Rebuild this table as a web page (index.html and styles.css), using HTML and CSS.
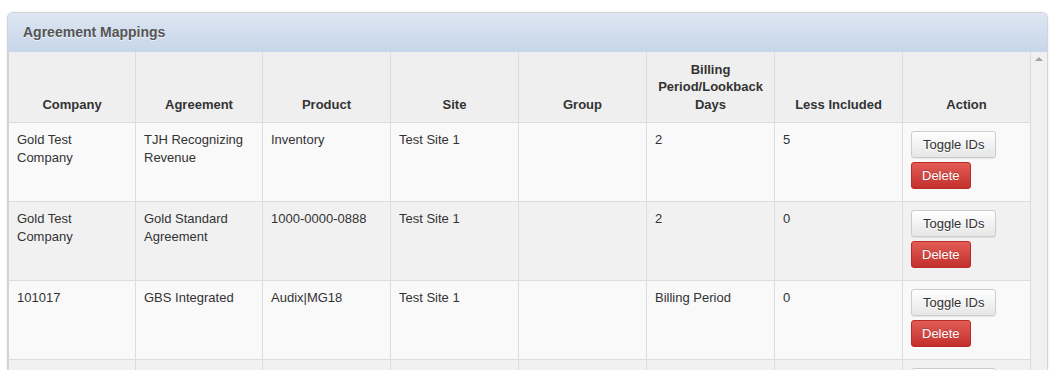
FILE: index.html
```
<!DOCTYPE html>
<html>
<head>
<meta charset="utf-8">
<link rel="stylesheet" href="styles.css">
</head>
<body>
<div class="page">
  <div class="panel">
    <div class="panel-heading">Agreement Mappings</div>
    <div class="panel-body">
      <table class="grid">
        <colgroup>
          <col class="c1"><col class="c2"><col class="c3"><col class="c3"><col class="c3"><col class="c3"><col class="c3"><col class="c3">
        </colgroup>
        <thead>
          <tr>
            <th>Company</th>
            <th>Agreement</th>
            <th>Product</th>
            <th>Site</th>
            <th>Group</th>
            <th>Billing Period/Lookback Days</th>
            <th>Less Included</th>
            <th>Action</th>
          </tr>
        </thead>
        <tbody>
          <tr class="odd">
            <td>Gold Test Company</td>
            <td>TJH Recognizing Revenue</td>
            <td>Inventory</td>
            <td>Test Site 1</td>
            <td></td>
            <td>2</td>
            <td>5</td>
            <td><div class="actions"><button class="btn btn-default">Toggle IDs</button><button class="btn btn-danger">Delete</button></div></td>
          </tr>
          <tr class="even">
            <td>Gold Test Company</td>
            <td>Gold Standard Agreement</td>
            <td>1000-0000-0888</td>
            <td>Test Site 1</td>
            <td></td>
            <td>2</td>
            <td>0</td>
            <td><div class="actions"><button class="btn btn-default">Toggle IDs</button><button class="btn btn-danger">Delete</button></div></td>
          </tr>
          <tr class="odd">
            <td>101017</td>
            <td>GBS Integrated</td>
            <td>Audix|MG18</td>
            <td>Test Site 1</td>
            <td></td>
            <td>Billing Period</td>
            <td>0</td>
            <td><div class="actions"><button class="btn btn-default">Toggle IDs</button><button class="btn btn-danger">Delete</button></div></td>
          </tr>
          <tr class="even">
            <td>&nbsp;</td>
            <td></td>
            <td></td>
            <td></td>
            <td></td>
            <td></td>
            <td></td>
            <td><div class="actions"><button class="btn btn-default">Toggle IDs</button><button class="btn btn-danger">Delete</button></div></td>
          </tr>
        </tbody>
      </table>
      <div class="scrollbar"><span class="arrow-up"></span></div>
    </div>
  </div>
</div>
</body>
</html>
```
FILE: styles.css
```
html, body {
  margin: 0;
  padding: 0;
  background: #fff;
  height: 370px;
  overflow: hidden;
}
body {
  font-family: "Liberation Sans", Arial, Helvetica, sans-serif;
  font-size: 13px;
  color: #333;
}
.page {
  padding: 12px 9px 0 7px;
}
.panel {
  border: 1px solid #d4d4d4;
  border-bottom: none;
  border-radius: 6px 6px 0 0;
  box-shadow: 0 0 2px rgba(0,0,0,0.12);
  overflow: hidden;
}
.panel-heading {
  height: 39px;
  line-height: 39px;
  padding: 0 15px;
  font-size: 14px;
  font-weight: bold;
  color: #555;
  text-shadow: 0 1px 0 rgba(255,255,255,0.7);
  background: linear-gradient(to bottom, #dde6f2 0%, #c7d6ea 100%);
}
.panel-body {
  display: flex;
  align-items: stretch;
  background: #f0f0f0;
}
.grid {
  border-collapse: collapse;
  table-layout: fixed;
  width: 1022px;
  flex: none;
}
.c1 { width: 127px; }
.c2 { width: 127px; }
.c3 { width: 128px; }
.grid th, .grid td {
  border: 1px solid #dcdcdc;
  padding: 8px 8px 8px;
  line-height: 17.5px;
  text-align: left;
  vertical-align: top;
}
.grid tr > :first-child { border-left: 1px solid #d4d4d4; }
.grid th {
  background: #efefef;
  font-weight: bold;
  text-align: center;
  vertical-align: bottom;
  height: 53px;
  padding-top: 8px;
  padding-bottom: 9px;
}
.grid tr.odd td { background: #f9f9f9; }
.grid tr.even td { background: #f1f1f1; }
.grid td { height: 62px; }
.grid thead tr th { border-top: none; }
.actions {
  display: flex;
  flex-direction: column;
  align-items: flex-start;
  gap: 4px;
}
.btn {
  font-family: "Liberation Sans", Arial, Helvetica, sans-serif;
  font-size: 13px;
  line-height: 17px;
  padding: 4px 11px;
  border-radius: 3px;
  border: 1px solid;
  cursor: pointer;
}
.btn-default {
  color: #333;
  background: linear-gradient(to bottom, #ffffff 0%, #e6e6e6 100%);
  border-color: #cccccc;
  text-shadow: 0 1px 0 #fff;
  box-shadow: inset 0 1px 0 rgba(255,255,255,0.15), 0 1px 1px rgba(0,0,0,0.075);
}
.btn-danger {
  color: #fff;
  background: linear-gradient(to bottom, #e35c57 0%, #c3302c 100%);
  border-color: #b92c28;
  text-shadow: 0 -1px 0 rgba(0,0,0,0.2);
  padding: 4px 10px;
}
.scrollbar {
  flex: 1;
  background: #f0f0f0;
  position: relative;
}
.arrow-up {
  position: absolute;
  left: 4px;
  top: 5px;
  width: 0;
  height: 0;
  border-left: 4px solid transparent;
  border-right: 4px solid transparent;
  border-bottom: 4px solid #a3a3a3;
}
```
